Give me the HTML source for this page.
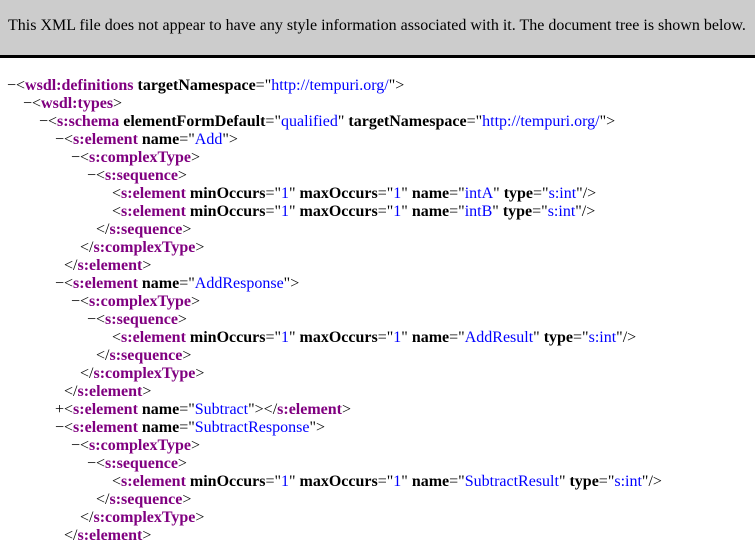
<!DOCTYPE html>
<html><head><style>
body{margin:0;width:755px;height:546px;overflow:hidden;background:#fff;font-family:"Liberation Serif",serif;font-size:16px;color:#000}
.hd{position:absolute;left:0;top:0;width:755px;height:55px;background:#cccccc;border-bottom:3px solid #000}
.hd div{position:absolute;left:8px;top:17px;white-space:nowrap}
.l{position:absolute;white-space:nowrap;line-height:18px;height:18px}
.m{position:absolute;left:-9px}
.t{color:#800080;font-weight:bold}
.a{font-weight:bold}
.v{color:#0000ff}
</style></head><body>
<div class="hd"><div>This XML file does not appear to have any style information associated with it. The document tree is shown below.</div></div>
<div class="l" style="left:16px;top:77px"><span class="m">−</span>&lt;<span class="t">wsdl:definitions</span> <span class="a">targetNamespace</span>="<span class="v">http://tempuri.org/</span>"&gt;</div>
<div class="l" style="left:32px;top:95px"><span class="m">−</span>&lt;<span class="t">wsdl:types</span>&gt;</div>
<div class="l" style="left:48px;top:113px"><span class="m">−</span>&lt;<span class="t">s:schema</span> <span class="a">elementFormDefault</span>="<span class="v">qualified</span>" <span class="a">targetNamespace</span>="<span class="v">http://tempuri.org/</span>"&gt;</div>
<div class="l" style="left:64px;top:131px"><span class="m">−</span>&lt;<span class="t">s:element</span> <span class="a">name</span>="<span class="v">Add</span>"&gt;</div>
<div class="l" style="left:80px;top:149px"><span class="m">−</span>&lt;<span class="t">s:complexType</span>&gt;</div>
<div class="l" style="left:96px;top:167px"><span class="m">−</span>&lt;<span class="t">s:sequence</span>&gt;</div>
<div class="l" style="left:112px;top:185px">&lt;<span class="t">s:element</span> <span class="a">minOccurs</span>="<span class="v">1</span>" <span class="a">maxOccurs</span>="<span class="v">1</span>" <span class="a">name</span>="<span class="v">intA</span>" <span class="a">type</span>="<span class="v">s:int</span>"/&gt;</div>
<div class="l" style="left:112px;top:203px">&lt;<span class="t">s:element</span> <span class="a">minOccurs</span>="<span class="v">1</span>" <span class="a">maxOccurs</span>="<span class="v">1</span>" <span class="a">name</span>="<span class="v">intB</span>" <span class="a">type</span>="<span class="v">s:int</span>"/&gt;</div>
<div class="l" style="left:96px;top:221px">&lt;/<span class="t">s:sequence</span>&gt;</div>
<div class="l" style="left:80px;top:239px">&lt;/<span class="t">s:complexType</span>&gt;</div>
<div class="l" style="left:64px;top:257px">&lt;/<span class="t">s:element</span>&gt;</div>
<div class="l" style="left:64px;top:275px"><span class="m">−</span>&lt;<span class="t">s:element</span> <span class="a">name</span>="<span class="v">AddResponse</span>"&gt;</div>
<div class="l" style="left:80px;top:293px"><span class="m">−</span>&lt;<span class="t">s:complexType</span>&gt;</div>
<div class="l" style="left:96px;top:311px"><span class="m">−</span>&lt;<span class="t">s:sequence</span>&gt;</div>
<div class="l" style="left:112px;top:329px">&lt;<span class="t">s:element</span> <span class="a">minOccurs</span>="<span class="v">1</span>" <span class="a">maxOccurs</span>="<span class="v">1</span>" <span class="a">name</span>="<span class="v">AddResult</span>" <span class="a">type</span>="<span class="v">s:int</span>"/&gt;</div>
<div class="l" style="left:96px;top:347px">&lt;/<span class="t">s:sequence</span>&gt;</div>
<div class="l" style="left:80px;top:365px">&lt;/<span class="t">s:complexType</span>&gt;</div>
<div class="l" style="left:64px;top:383px">&lt;/<span class="t">s:element</span>&gt;</div>
<div class="l" style="left:64px;top:401px"><span class="m">+</span>&lt;<span class="t">s:element</span> <span class="a">name</span>="<span class="v">Subtract</span>"&gt;&lt;/<span class="t">s:element</span>&gt;</div>
<div class="l" style="left:64px;top:419px"><span class="m">−</span>&lt;<span class="t">s:element</span> <span class="a">name</span>="<span class="v">SubtractResponse</span>"&gt;</div>
<div class="l" style="left:80px;top:437px"><span class="m">−</span>&lt;<span class="t">s:complexType</span>&gt;</div>
<div class="l" style="left:96px;top:455px"><span class="m">−</span>&lt;<span class="t">s:sequence</span>&gt;</div>
<div class="l" style="left:112px;top:473px">&lt;<span class="t">s:element</span> <span class="a">minOccurs</span>="<span class="v">1</span>" <span class="a">maxOccurs</span>="<span class="v">1</span>" <span class="a">name</span>="<span class="v">SubtractResult</span>" <span class="a">type</span>="<span class="v">s:int</span>"/&gt;</div>
<div class="l" style="left:96px;top:491px">&lt;/<span class="t">s:sequence</span>&gt;</div>
<div class="l" style="left:80px;top:509px">&lt;/<span class="t">s:complexType</span>&gt;</div>
<div class="l" style="left:64px;top:527px">&lt;/<span class="t">s:element</span>&gt;</div>
</body></html>
